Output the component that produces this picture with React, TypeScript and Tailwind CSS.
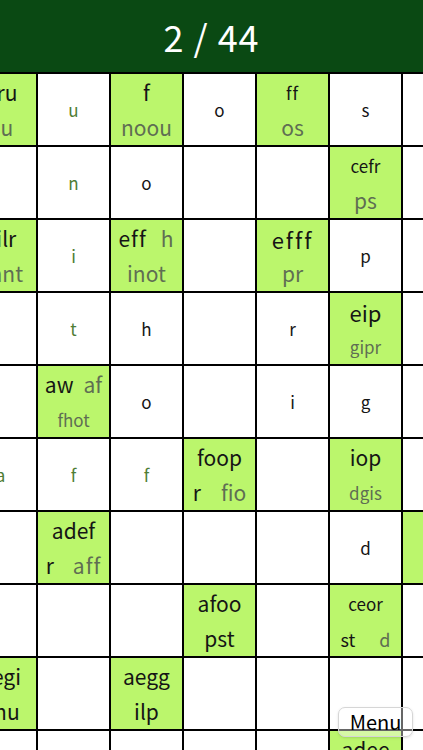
import React from 'react';

type Tone = 'k' | 'g';
type Seg = [string, Tone];
type Line = { segs: Seg[]; size: string; gap?: string };
type Cell = {
  fill?: boolean;
  one?: [string, 'k' | 'n'];
  lines?: Line[];
};

const W: Cell = {};
const one = (t: string, c: 'k' | 'n'): Cell => ({ one: [t, c] });
const L = (segs: Seg[], size = 'text-[21px]', gap?: string): Line => ({ segs, size, gap });
const G = (...lines: Line[]): Cell => ({ fill: true, lines });
const GE: Cell = { fill: true };

const rows: Cell[][] = [
  [
    G(L([['dru', 'k']]), L([['ou', 'g']])),
    one('u', 'n'),
    G(L([['f', 'k']]), L([['noou', 'g']])),
    one('o', 'k'),
    G(L([['ff', 'k']], 'text-[17px] tracking-[1px]'), L([['os', 'g']])),
    one('s', 'k'),
    W,
  ],
  [W, one('n', 'n'), one('o', 'k'), W, W, G(L([['cefr', 'k']], 'text-[17px]'), L([['ps', 'g']])), W],
  [
    G(L([['eilr', 'k']]), L([['ehnt', 'g']])),
    one('i', 'n'),
    G(L([['eff', 'k'], ['h', 'g']], 'text-[21px] tracking-[1px]', 'gap-[14px]'), L([['inot', 'g']])),
    W,
    G(L([['efff', 'k']], 'text-[22px] tracking-[2px]'), L([['pr', 'g']])),
    one('p', 'k'),
    W,
  ],
  [W, one('t', 'n'), one('h', 'k'), W, one('r', 'k'), G(L([['eip', 'k']], 'text-[22px]'), L([['gipr', 'g']], 'text-[17px]')), W],
  [
    W,
    G(L([['aw', 'k'], ['af', 'g']], 'text-[21px]', 'gap-[10px]'), L([['fhot', 'g']], 'text-[17px]')),
    one('o', 'k'),
    W,
    one('i', 'k'),
    one('g', 'k'),
    W,
  ],
  [
    one('a', 'n'),
    one('f', 'n'),
    one('f', 'n'),
    G(L([['foop', 'k']]), L([['r', 'k'], ['fio', 'g']], 'text-[21px]', 'gap-[20px]')),
    W,
    G(L([['iop', 'k']]), L([['dgis', 'g']], 'text-[17px]')),
    W,
  ],
  [W, G(L([['adef', 'k']]), L([['r', 'k'], ['aff', 'g']], 'text-[21px] tracking-[1px]', 'gap-[18px]')), W, W, W, one('d', 'k'), GE],
  [
    W,
    W,
    W,
    G(L([['afoo', 'k']]), L([['pst', 'k']])),
    W,
    G(L([['ceor', 'k']], 'text-[17px]'), L([['st', 'k'], ['d', 'g']], 'text-[18px]', 'gap-[24px]')),
    W,
  ],
  [G(L([['aegi', 'k']]), L([['hnu', 'k']])), W, G(L([['aegg', 'k']]), L([['ilp', 'k']])), W, W, W, W],
  [W, W, W, W, W, G(L([['adee', 'k']])), W],
];

function Square({ cell }: { cell: Cell }) {
  const bg = cell.fill ? 'bg-[#bbf66c]' : 'bg-white';
  if (cell.one) {
    return (
      <div className={`${bg} flex items-center justify-center text-[17px] ${cell.one[1] === 'n' ? 'text-[#4f7d35]' : 'text-[#151515]'}`}>
        {cell.one[0]}
      </div>
    );
  }
  return (
    <div className={`${bg} flex flex-col items-center pt-[1px]`}>
      {cell.lines?.map((line, i) => (
        <div key={i} className={`flex h-[35px] items-center justify-center leading-none ${line.size} ${line.gap ?? ''}`}>
          {line.segs.map(([t, c], j) => (
            <span key={j} className={c === 'k' ? 'text-[#151515]' : 'text-[#5f6e53]'}>
              {t}
            </span>
          ))}
        </div>
      ))}
    </div>
  );
}

export default function App() {
  return (
    <div
      className="relative h-[750px] w-[423px] overflow-hidden bg-black [font-variant-ligatures:none]"
      style={{ fontFamily: '"Noto Sans CJK JP", "Noto Sans", sans-serif' }}
    >
      <header className="flex h-[72px] items-center justify-center bg-[#0a4913] text-[36px] tracking-[1px] text-white">
        2 / 44
      </header>

      <div className="ml-[-35px] grid w-[509px] grid-cols-[repeat(7,71px)] auto-rows-[71px] gap-[2px] bg-black pt-[2px]">
        {rows.flat().map((cell, i) => (
          <Square key={i} cell={cell} />
        ))}
      </div>

      <button className="absolute bottom-[13px] right-[10px] flex h-[30px] w-[75px] items-center justify-center rounded-[7px] border border-[#d6d6d6] bg-white/40 text-[20px] text-black shadow-sm">
        Menu
      </button>
    </div>
  );
}
